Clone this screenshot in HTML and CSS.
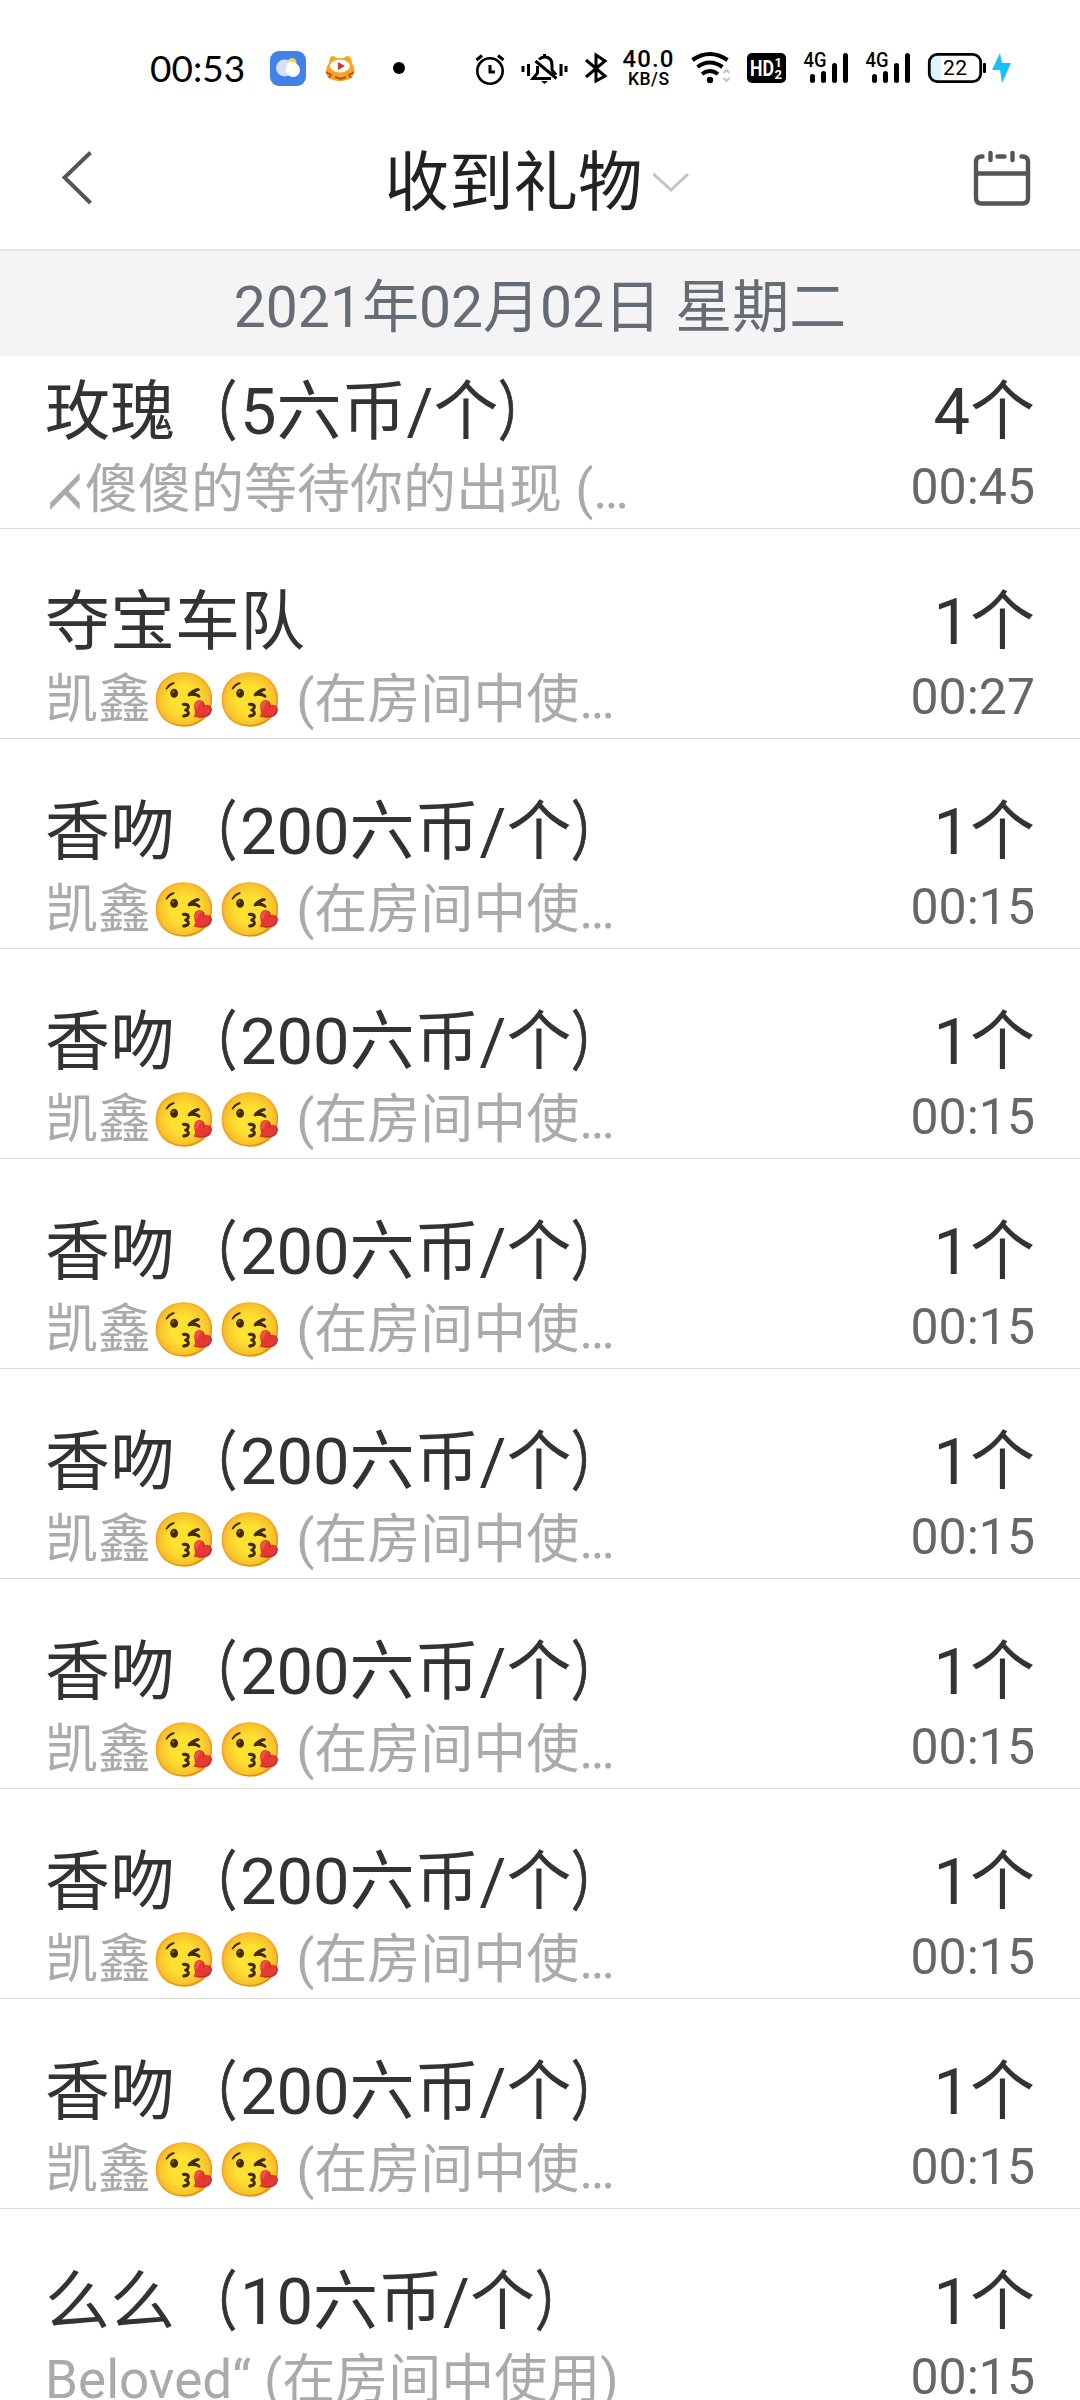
FILE: index.html
```html
<!DOCTYPE html>
<html lang="zh-CN">
<head>
<meta charset="utf-8">
<title>收到礼物</title>
<link rel="stylesheet" href="styles.css">
</head>
<body>
<div class="status">
  <span class="clock">00:53</span>
  <svg class="status-icons" width="900" height="80" viewBox="180 30 900 80">
    <rect x="270" y="51" width="36" height="35" rx="9" fill="#4280ea"/>
    <circle cx="292" cy="62.500" r="4.500" fill="#f8d823"/>
    <circle cx="284.500" cy="68" r="8.500" fill="#d3e1fb"/>
    <circle cx="293" cy="70" r="7" fill="#fff"/><circle cx="292" cy="67" r="5.500" fill="#fff"/>
    <path d="M330 58q3-4 6 0h8q4-4 7 0l1 5q3 5 2 10c-1 6-8 8-14 8s-13-2-14-8q0-6 3-10z" fill="#f6a51c"/>
    <path d="M326 72l5 3-2 3M354 72l-5 3 2 3M335 77l6 2 5-2" fill="none" stroke="#b5532a" stroke-width="2"/>
    <ellipse cx="340" cy="66" rx="10" ry="6.500" fill="#fff"/>
    <path d="M338 62l7 4-7 4z" fill="#c2402d"/>
    <circle cx="399" cy="68" r="6"/>
    <g fill="none" stroke="#000" stroke-width="2.600">
      <circle cx="490" cy="71" r="12.700"/>
      <path d="M490 65v7h5M476.500 60l5.500-4.500M503.500 60l-5.500-4.500" stroke-width="3"/>
      <path d="M523 66v6M528.500 64v12M561 64v12M566 66v6M535.500 61l21 17.500M537.500 66v7l-4.500 5.500h18M539 59.500q2.500-2.500 5.500-2.500q7.500 0 7.500 8v5l4 5M544.500 54v3" stroke-width="3"/>
      <path d="M586 60l19 16-9 5v-26l9 6-19 16" stroke-width="3"/>
      <path d="M692.500 60q17-12 35 0M697.500 67q12-9 25 0M702 74q8-6 16 0" stroke-width="4"/>
      <path d="M723.500 73l3-3 3 3M723.500 78l3 3 3-3" stroke="#c4c4c4" stroke-width="2"/>
    </g>
    <path d="M541 81h7l-3.500 3z"/>
    <circle cx="710" cy="80" r="3.200"/>
    <rect x="747" y="53" width="39" height="30" rx="5"/>
    <g stroke="#000" stroke-width="5" stroke-linecap="round">
      <path d="M812.500 76.500v4M823.500 73.500v7M834.500 65.500v15M845.500 55.500v25M874.500 76.500v4M885.500 73.500v7M896.500 65.500v15M907.500 55.500v25"/>
    </g>
    <path d="M931 60q1-4 5-4h5v24h-5q-4 0-5-4z" fill="#dff3fe"/>
    <rect x="929.300" y="54.300" width="51.400" height="27.400" rx="8" fill="none" stroke="#000" stroke-width="2.800"/>
    <rect x="983" y="63" width="3" height="10" rx="1"/>
    <path d="M1000 53l-8 17h8l2 13 9-20h-9z" fill="#17c0fb"/>
    <g font-family="Roboto, sans-serif">
      <text x="622.500" y="67" font-size="24" font-weight="500" textLength="51">40.0</text>
      <text x="628" y="85" font-size="17.500" font-weight="500" textLength="41">KB/S</text>
      <text x="750" y="76" font-size="22" font-weight="700" fill="#fff" textLength="24" lengthAdjust="spacingAndGlyphs">HD</text>
      <text x="774.500" y="67" font-size="13" font-weight="700" fill="#fff">1</text>
      <text x="774.500" y="79" font-size="13" font-weight="700" fill="#fff">2</text>
      <text x="803.500" y="67" font-size="20" font-weight="500" textLength="23" lengthAdjust="spacingAndGlyphs">4G</text>
      <text x="865.500" y="67" font-size="20" font-weight="500" textLength="23" lengthAdjust="spacingAndGlyphs">4G</text>
      <text x="943" y="75" font-size="21" textLength="24">22</text>
    </g>
  </svg>
</div>
<header class="bar">
  <svg width="40" height="60" viewBox="0 0 40 60"><path d="M28.500 2.500L2.500 27.500l26 25.500" fill="none" stroke="#555" stroke-width="4"/></svg>
  <h1 class="title">收到礼物<svg width="38" height="20" viewBox="0 0 38 20"><path d="M1.500 1L19 17 36 1" fill="none" stroke="#c4c4c4" stroke-width="3"/></svg></h1>
  <svg width="60" height="60" viewBox="0 0 60 60"><g fill="none" stroke="#555" stroke-width="4.400" stroke-linecap="round"><path d="M10.500 6.500h-1q-5.500 0-5.500 5.500v36q0 5.500 5.500 5.500h41q5.500 0 5.500-5.500v-36q0-5.500-5.500-5.500h-1M25.500 6.500h7M4 23.500h52M18.500 3v7M40.500 3v7"/></g></svg>
</header>
<div class="date">2021年02月02日 星期二</div>
<main class="list">
  <section class="row"><div class="line"><span>玫瑰<i class="po">（</i>5六币/个<i class="pc">）</i></span><span>4个</span></div><div class="line sub"><span><span class="sym">⋌</span>傻傻的等待你的出现 (…</span><time>00:45</time></div></section>
  <section class="row"><div class="line"><span>夺宝车队</span><span>1个</span></div><div class="line sub"><span>凯鑫😘😘 (在房间中使…</span><time>00:27</time></div></section>
  <section class="row"><div class="line"><span>香吻<i class="po">（</i>200六币/个<i class="pc">）</i></span><span>1个</span></div><div class="line sub"><span>凯鑫😘😘 (在房间中使…</span><time>00:15</time></div></section>
  <section class="row"><div class="line"><span>香吻<i class="po">（</i>200六币/个<i class="pc">）</i></span><span>1个</span></div><div class="line sub"><span>凯鑫😘😘 (在房间中使…</span><time>00:15</time></div></section>
  <section class="row"><div class="line"><span>香吻<i class="po">（</i>200六币/个<i class="pc">）</i></span><span>1个</span></div><div class="line sub"><span>凯鑫😘😘 (在房间中使…</span><time>00:15</time></div></section>
  <section class="row"><div class="line"><span>香吻<i class="po">（</i>200六币/个<i class="pc">）</i></span><span>1个</span></div><div class="line sub"><span>凯鑫😘😘 (在房间中使…</span><time>00:15</time></div></section>
  <section class="row"><div class="line"><span>香吻<i class="po">（</i>200六币/个<i class="pc">）</i></span><span>1个</span></div><div class="line sub"><span>凯鑫😘😘 (在房间中使…</span><time>00:15</time></div></section>
  <section class="row"><div class="line"><span>香吻<i class="po">（</i>200六币/个<i class="pc">）</i></span><span>1个</span></div><div class="line sub"><span>凯鑫😘😘 (在房间中使…</span><time>00:15</time></div></section>
  <section class="row"><div class="line"><span>香吻<i class="po">（</i>200六币/个<i class="pc">）</i></span><span>1个</span></div><div class="line sub"><span>凯鑫😘😘 (在房间中使…</span><time>00:15</time></div></section>
  <section class="row"><div class="line"><span>么么<i class="po">（</i>10六币/个<i class="pc">）</i></span><span>1个</span></div><div class="line sub"><span>Beloved“ (在房间中使用)</span><time>00:15</time></div></section>
</main>
</body>
</html>
```
FILE: styles.css
```css
* { box-sizing: border-box; }
body {
  margin: 0;
  width: 1080px;
  height: 2400px;
  overflow: hidden;
  display: flex;
  flex-direction: column;
  background: #fff;
  color: #333;
  font-family: Roboto, "Noto Sans CJK SC", sans-serif;
}
svg { display: block; flex: none; }
.status { display: flex; height: 110px; padding-top: 30px; color: #000; flex: none; }
.clock { width: 180px; padding-left: 150px; font: 37px/76px Lato, sans-serif; white-space: nowrap; }
.bar {
  height: 141px;
  flex: none;
  display: flex;
  justify-content: space-between;
  align-items: flex-start;
  padding: 40px 48px 0 62px;
  border-bottom: 2px solid #e4e4e4;
}
.title {
  margin: 0;
  display: flex;
  align-items: center;
  gap: 9px;
  font-size: 64.500px;
  font-weight: 400;
  line-height: 66px;
  color: #222;
}
.date {
  height: 105px;
  flex: none;
  background: #f4f4f4;
  color: #666c74;
  font-size: 57px;
  line-height: 113px;
  text-align: center;
}
.list { flex: none; margin-top: -37px; }
.row { height: 210px; padding: 55px 45px 0; border-bottom: 1px solid #ddd; }
.line { display: flex; justify-content: space-between; height: 76px; line-height: 76px; font-size: 65px; white-space: nowrap; }
.po, .pc { display: inline-block; font-style: normal; transform: scaleX(.75); transform-origin: 82% 50%; -webkit-text-stroke: 1px #333; }
.pc { transform-origin: 0 50%; }
.sub { font-size: 53px; line-height: 80px; color: #aaa; }
.sub time { font-size: 50px; line-height: 74px; color: #666; }
.sym {
  display: inline-block;
  font-family: "DejaVu Sans", sans-serif;
  font-size: 40px;
  line-height: 1;
  -webkit-text-stroke: 1px #aaa;
  transform: translateY(-5px) scale(.9, 1.25);
}
```
